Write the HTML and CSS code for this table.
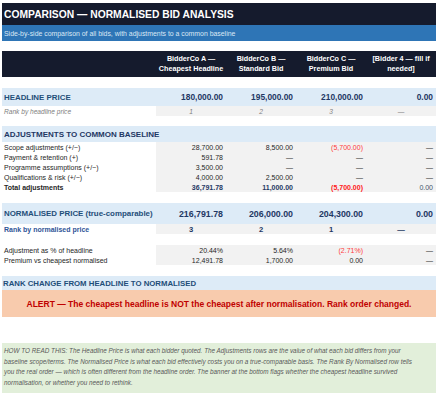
FILE: index.html
```html
<!DOCTYPE html>
<html>
<head>
<meta charset="utf-8">
<link rel="stylesheet" href="styles.css">
</head>
<body>
<div class="sheet">
  <div class="title">COMPARISON — NORMALISED BID ANALYSIS</div>
  <div class="subtitle">Side-by-side comparison of all bids, with adjustments to a common baseline</div>

  <div class="row colhead gap10">
    <div></div>
    <div class="hc">BidderCo A —<br>Cheapest Headline</div>
    <div class="hc">BidderCo B —<br>Standard Bid</div>
    <div class="hc">BidderCo C —<br>Premium Bid</div>
    <div class="hc">[Bidder 4 — fill if<br>needed]</div>
  </div>

  <div class="row headline gap11">
    <div class="lab">HEADLINE PRICE</div>
    <div class="v">180,000.00</div>
    <div class="v">195,000.00</div>
    <div class="v">210,000.00</div>
    <div class="v">0.00</div>
  </div>
  <div class="row data rank-h">
    <div class="lab">Rank by headline price</div>
    <div class="c">1</div>
    <div class="c">2</div>
    <div class="c">3</div>
    <div class="c">—</div>
  </div>

  <div class="section gap10">ADJUSTMENTS TO COMMON BASELINE</div>
  <div class="row data">
    <div class="lab">Scope adjustments (+/−)</div>
    <div class="v">28,700.00</div>
    <div class="v">8,500.00</div>
    <div class="v neg">(5,700.00)</div>
    <div class="v">—</div>
  </div>
  <div class="row data">
    <div class="lab">Payment &amp; retention (+)</div>
    <div class="v">591.78</div>
    <div class="v">—</div>
    <div class="v">—</div>
    <div class="v">—</div>
  </div>
  <div class="row data">
    <div class="lab">Programme assumptions (+/−)</div>
    <div class="v">3,500.00</div>
    <div class="v">—</div>
    <div class="v">—</div>
    <div class="v">—</div>
  </div>
  <div class="row data">
    <div class="lab">Qualifications &amp; risk (+/−)</div>
    <div class="v">4,000.00</div>
    <div class="v">2,500.00</div>
    <div class="v">—</div>
    <div class="v">—</div>
  </div>
  <div class="row data total">
    <div class="lab">Total adjustments</div>
    <div class="v">36,791.78</div>
    <div class="v">11,000.00</div>
    <div class="v neg">(5,700.00)</div>
    <div class="v plain">0.00</div>
  </div>

  <div class="row normalised gap11">
    <div class="lab">NORMALISED PRICE (true-comparable)</div>
    <div class="v">216,791.78</div>
    <div class="v">206,000.00</div>
    <div class="v">204,300.00</div>
    <div class="v">0.00</div>
  </div>
  <div class="row data rank-n">
    <div class="lab">Rank by normalised price</div>
    <div class="c">3</div>
    <div class="c">2</div>
    <div class="c">1</div>
    <div class="c">—</div>
  </div>

  <div class="row data gap11">
    <div class="lab">Adjustment as % of headline</div>
    <div class="v">20.44%</div>
    <div class="v">5.64%</div>
    <div class="v neg">(2.71%)</div>
    <div class="v">—</div>
  </div>
  <div class="row data">
    <div class="lab">Premium vs cheapest normalised</div>
    <div class="v">12,491.78</div>
    <div class="v">1,700.00</div>
    <div class="v">0.00</div>
    <div class="v">—</div>
  </div>

  <div class="section small gap11">RANK CHANGE FROM HEADLINE TO NORMALISED</div>
  <div class="alert">ALERT — The cheapest headline is NOT the cheapest after normalisation. Rank order changed.</div>

  <div class="note">HOW TO READ THIS: The Headline Price is what each bidder quoted. The Adjustments rows are the value of what each bid differs from your<br>baseline scope/terms. The Normalised Price is what each bid effectively costs you on a true-comparable basis. The Rank By Normalised row tells<br>you the real order — which is often different from the headline order. The banner at the bottom flags whether the cheapest headline survived<br>normalisation, or whether you need to rethink.</div>
</div>
</body>
</html>
```

FILE: styles.css
```css
html, body {
  margin: 0;
  padding: 0;
  background: #ffffff;
}
body {
  padding: 3px 4px 0 2px;
  font-family: "Liberation Sans", Arial, sans-serif;
  color: #262626;
}
.sheet {
  width: 434px;
  display: flex;
  flex-direction: column;
}
.title {
  height: 22px;
  background: #151b2d;
  color: #ffffff;
  font-weight: bold;
  font-size: 10.3px;
  padding-left: 2px;
  display: flex;
  align-items: center;
}
.subtitle {
  height: 16px;
  background: #2e75b6;
  color: #dbe8f5;
  font-size: 6.9px;
  padding-left: 2px;
  display: flex;
  align-items: center;
}
.gap10 { margin-top: 10px; }
.gap11 { margin-top: 11px; }

.row {
  display: grid;
  grid-template-columns: 154px repeat(4, 70px);
}
.row > div {
  display: flex;
  align-items: center;
  white-space: nowrap;
}
.lab { padding-left: 2px; }
.v { justify-content: flex-end; padding-right: 3px; }
.c { justify-content: center; }

.colhead {
  height: 26px;
  background: #151b2d;
}
.colhead .hc {
  color: #ffffff;
  font-weight: bold;
  font-size: 7.2px;
  line-height: 10px;
  text-align: center;
  justify-content: center;
}

.headline {
  height: 18px;
  background: #ddebf7;
  font-weight: bold;
}
.headline .lab { color: #1f4e79; font-size: 7.9px; }
.headline .v { color: #1f3864; font-size: 8.4px; }

.data { height: 10px; font-size: 7px; }
.data > div:not(.lab) { background: #f2f2f2; }

.rank-h > div { font-style: italic; color: #808080; font-size: 6.6px; }

.section {
  height: 16px;
  background: #ddebf7;
  color: #1f3864;
  font-weight: bold;
  font-size: 8px;
  padding-left: 2px;
  display: flex;
  align-items: center;
}
.section.small {
  height: 14px;
  font-size: 7.8px;
  color: #1f4e79;
  padding-left: 1px;
}
.neg { color: #ff3b3b; }

.total > div { font-weight: bold; }
.total .v { color: #1f3864; }
.total .v.neg { color: #ff2020; }
.total .v.plain { font-weight: normal; color: #44546a; }

.normalised {
  height: 21px;
  background: #ddebf7;
  font-weight: bold;
}
.normalised .lab { color: #1f4e79; font-size: 7.9px; }
.normalised .v { color: #1f3864; font-size: 8.8px; }

.rank-n > div { font-weight: bold; }
.rank-n .lab { color: #2f5597; font-size: 7px; }
.rank-n .c { color: #1f3864; font-size: 7.6px; }

.alert {
  height: 27px;
  background: #f8cbad;
  color: #c00000;
  font-weight: bold;
  font-size: 8.5px;
  display: flex;
  align-items: center;
  justify-content: center;
}
.note {
  margin-top: 26px;
  height: 50px;
  box-sizing: border-box;
  background: #e2efda;
  color: #595959;
  font-style: italic;
  font-size: 6.35px;
  line-height: 10.5px;
  padding: 3px 2px 0 2px;
  white-space: nowrap;
}
```
